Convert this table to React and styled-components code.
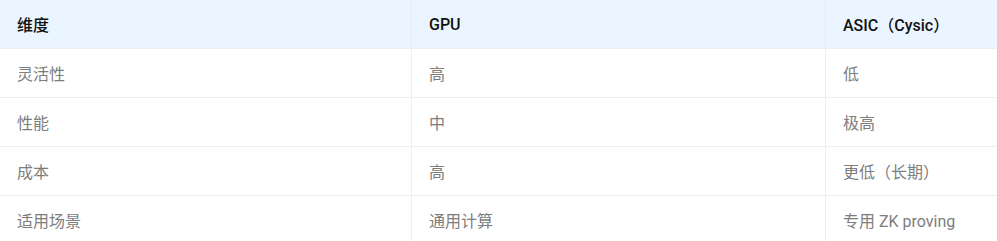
import styled, { createGlobalStyle } from "styled-components";

const GlobalStyle = createGlobalStyle`
  body {
    margin: 0;
    background: #ffffff;
    overflow: hidden;
  }
`;

const Wrapper = styled.div`
  width: 997px;
  overflow: hidden;
  font-family: Roboto, "Noto Sans CJK SC", sans-serif;
  font-size: 16px;
`;

const Grid = styled.div`
  display: grid;
  grid-template-columns: 412px 414px 290px;
  width: 1116px;
`;

const Cell = styled.div`
  display: flex;
  align-items: center;
  height: 48px;
  padding: 0 17px;
  white-space: nowrap;
  border-right: 1px solid ${({ head }) => (head ? "#e2ecf5" : "#eeeeee")};
  border-bottom: 1px solid #eeeeee;
  background: ${({ head }) => (head ? "#eaf5ff" : "#ffffff")};
  color: ${({ head }) => (head ? "#111111" : "#7d7d7d")};
  font-weight: ${({ head }) => (head ? 500 : 400)};
`;

const columns = ["维度", "GPU", "ASIC（Cysic）"];

const rows = [
  ["灵活性", "高", "低"],
  ["性能", "中", "极高"],
  ["成本", "高", "更低（长期）"],
  ["适用场景", "通用计算", "专用 ZK proving"],
];

export default function App() {
  return (
    <Wrapper>
      <GlobalStyle />
      <Grid>
        {columns.map((c) => (
          <Cell head key={c}>{c}</Cell>
        ))}
        {rows.map((r, i) =>
          r.map((v, j) => <Cell key={`${i}-${j}`}>{v}</Cell>)
        )}
      </Grid>
    </Wrapper>
  );
}
